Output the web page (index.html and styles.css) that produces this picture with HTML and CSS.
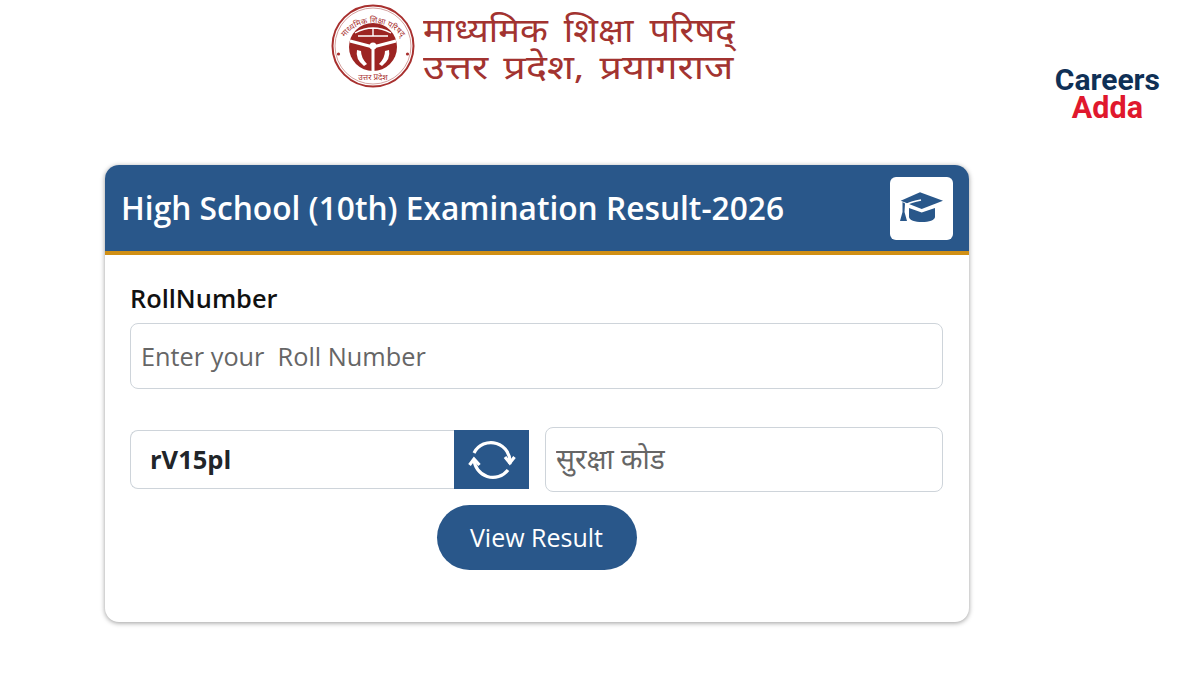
FILE: index.html
```html
<!DOCTYPE html>
<html lang="en">
<head>
<meta charset="UTF-8">
<title>High School (10th) Examination Result-2026</title>
<link rel="stylesheet" href="styles.css">
</head>
<body>

<!-- TOP BRANDING -->
<div class="top-bar">
  <div class="board">
    <svg class="seal" width="84" height="84" viewBox="0 0 84 84">
      <defs>
        <path id="sealTop" d="M7.5 48 A35 35 0 0 1 76.5 48"/>
      </defs>
      <circle cx="42" cy="42" r="40.5" fill="#fff" stroke="#a8302f" stroke-width="2"/>
      <circle cx="42" cy="42" r="38" fill="none" stroke="#c98a88" stroke-width="0.8"/>
      <text class="seal-text"><textPath href="#sealTop" startOffset="50%" text-anchor="middle">माध्यमिक शिक्षा परिषद्</textPath></text>
      <text class="seal-text" x="42" y="76" text-anchor="middle">उत्तर प्रदेश</text>
      <circle cx="42" cy="43" r="24" fill="#9c2422"/>
      <path d="M24 29 Q42 19 60 29 M27 32 L57 32 M42 24 V32" fill="none" stroke="#fff" stroke-width="1.4"/>
      <path d="M42 43 L42 67 M42 43 L19 37 M42 43 L65 37" fill="none" stroke="#fff" stroke-width="3"/>
      <circle cx="42" cy="42" r="3.5" fill="#fff"/>
      <path d="M26 46 Q24 55 33 62 L36 60 Q30 54 30 47 Z M58 46 Q60 55 51 62 L48 60 Q54 54 54 47 Z" fill="#fff"/>
      <circle cx="7.5" cy="50" r="1.6" fill="#a8302f"/>
      <circle cx="76.5" cy="50" r="1.6" fill="#a8302f"/>
    </svg>
    <div class="board-name">
      <div class="board-line line-one">माध्यमिक शिक्षा परिषद्</div>
      <div class="board-line line-two">उत्तर प्रदेश, प्रयागराज</div>
    </div>
  </div>
  <div class="careers">
    <div class="careers-top">Careers</div>
    <div class="careers-bottom">Adda</div>
  </div>
</div>

<!-- RESULT CARD -->
<div class="card">
  <div class="card-head">
    <h1>High School (10th) Examination Result-2026</h1>
    <div class="cap-box">
      <svg width="46" height="34" viewBox="0 0 46 34">
        <path d="M21 1.3 L44 9.7 L22.7 18 L1.7 9.7 Z" fill="#29578a"/>
        <path d="M10 17 L22.7 21.5 L36 17 V26 C36 29 30 31 23 31 C16 31 10 29 10 26 Z" fill="#29578a"/>
        <path d="M3.5 11 L6 12.5 L5.5 21 L8 30 H1 L3.5 21 Z" fill="#29578a"/>
        <path d="M22 9 Q12 11 8.5 13 Q6.8 14.5 7.5 20" fill="none" stroke="#fff" stroke-width="1.6"/>
      </svg>
    </div>
  </div>

  <div class="card-body">
    <label class="field-label" for="roll">RollNumber</label>
    <input class="text-input roll-input" id="roll" type="text" placeholder="Enter your &nbsp;Roll Number">

    <div class="captcha-row">
      <div class="captcha-group">
        <div class="captcha-code">rV15pl</div>
        <div class="refresh">
          <svg width="48" height="44" viewBox="0 0 48 44">
            <path d="M6 15 A19 19 0 0 1 41.8 26" fill="none" stroke="#fff" stroke-width="3.2"/>
            <path d="M37 19 L41.8 25 L46.5 19" fill="none" stroke="#fff" stroke-width="3.2"/>
            <path d="M40 32 A19 19 0 0 1 6 21" fill="none" stroke="#fff" stroke-width="3.2"/>
            <path d="M1.5 27 L6 21 L11.5 27" fill="none" stroke="#fff" stroke-width="3.2"/>
          </svg>
        </div>
      </div>
      <input class="text-input code-input" type="text" placeholder="सुरक्षा कोड">
    </div>

    <div class="actions">
      <button class="view-btn">View Result</button>
    </div>
  </div>
</div>

</body>
</html>
```

FILE: styles.css
```css
* { box-sizing: border-box; font-family: "Open Sans", "Noto Sans", sans-serif; }
body { margin: 0; background: #fff; height: 675px; overflow: hidden; }

/* TOP BRANDING */
.top-bar {
  display: flex;
  justify-content: space-between;
  height: 165px;
  padding: 4px 40px 0 331px;
}

.board { display: flex; gap: 8px; height: 84px; }
.seal-text { font-size: 8px; fill: #a8302f; font-family: "Noto Sans", sans-serif; }

.board-name { padding-top: 7px; color: #a23330; }
.board-line {
  font-family: "Noto Sans", sans-serif;
  font-size: 33px;
  line-height: 37px;
  white-space: nowrap;
  transform-origin: left top;
}
.line-one { word-spacing: 6px; transform: scaleX(1.1); }
.line-two { word-spacing: 4px; transform: scaleX(1.2); }

.careers { margin-top: 61px; text-align: center; font-weight: 700; }
.careers-top { font-family: Roboto, sans-serif; font-size: 30px; line-height: 29px; color: #0f3056; }
.careers-bottom { font-family: Roboto, sans-serif; font-size: 30.5px; line-height: 28px; color: #e0182d; }

/* CARD */
.card {
  width: 864px;
  height: 457px;
  margin-left: 105px;
  border-radius: 14px;
  background: #fff;
  box-shadow: 0 1px 5px rgba(0, 0, 0, 0.4);
  overflow: hidden;
}

.card-head {
  display: flex;
  justify-content: space-between;
  align-items: center;
  height: 90px;
  padding: 0 16px 0 16px;
  background: #29578a;
  border-bottom: 4px solid #d08f14;
}

.card-head h1 {
  margin: 0 0 2px;
  font-size: 31.7px;
  font-weight: 600;
  color: #fff;
}

.cap-box {
  display: flex;
  align-items: center;
  justify-content: center;
  width: 63px;
  height: 63px;
  border-radius: 6px;
  background: #fff;
}

.card-body { padding: 26px 26px 0 25px; }

.field-label {
  display: block;
  margin-bottom: 8px;
  font-size: 25.4px;
  line-height: 34px;
  font-weight: 600;
  color: #111;
}

.text-input {
  display: block;
  border: 1px solid #ced4da;
  border-radius: 8px;
  padding: 0 10px;
  font-size: 25.3px;
  color: #444;
  outline: none;
  background: #fff;
}
.text-input::placeholder { color: #666; opacity: 1; }

.roll-input { width: 100%; height: 66px; }

.captcha-row {
  display: flex;
  align-items: center;
  gap: 16px;
  margin-top: 38px;
}

.captcha-group { display: flex; flex: 0 0 399px; height: 59px; }

.captcha-code {
  flex: 1;
  padding-left: 19px;
  border: 1px solid #ced4da;
  border-right: none;
  border-radius: 8px 0 0 8px;
  font-size: 25.5px;
  line-height: 57px;
  font-weight: 700;
  color: #212529;
}

.refresh {
  display: flex;
  align-items: center;
  justify-content: center;
  width: 75px;
  background: #29578a;
}

.code-input {
  flex: 1;
  min-width: 0;
  height: 65px;
  padding-bottom: 3px;
  font-family: "Noto Sans", sans-serif;
  font-size: 28px;
}

.actions { display: flex; justify-content: center; margin-top: 13px; }

.view-btn {
  width: 200px;
  height: 65px;
  padding: 0 0 2px;
  border: none;
  border-radius: 33px;
  background: #29578a;
  color: #fff;
  font-size: 25px;
}
```
